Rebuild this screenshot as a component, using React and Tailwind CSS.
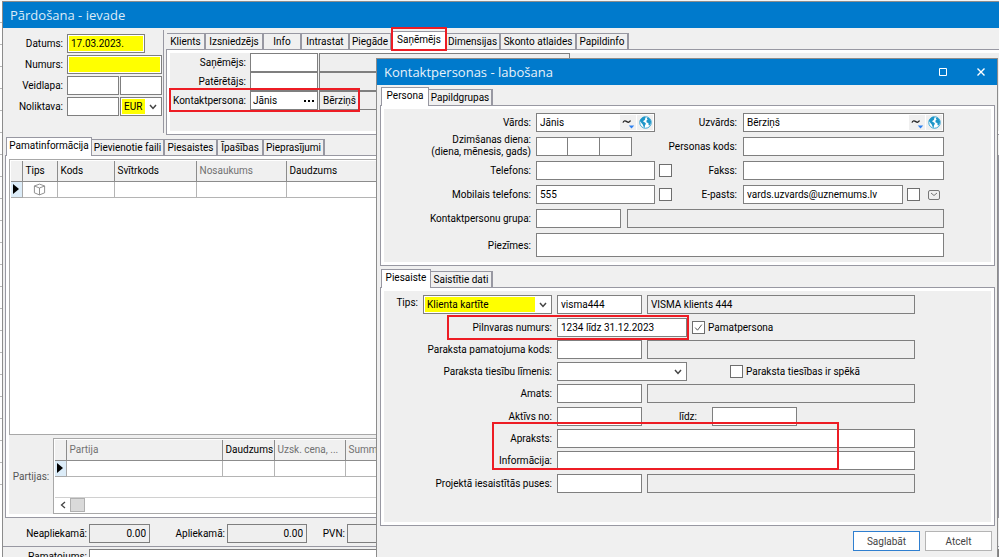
import clsx from "clsx";

/* =========================
   FORM PARTS
========================= */
const box =
  "h-[19px] min-w-0 rounded-none border border-[#7f7f7f] px-[3px] leading-[15px] outline-none";

function Field({ id, label, value = "", className, tone = "bg-white" }) {
  return (
    <input
      id={id}
      aria-label={label}
      defaultValue={value}
      readOnly={tone === "bg-[#efefef]"}
      className={clsx(box, tone, className)}
    />
  );
}

function ReadOnly(props) {
  return <Field {...props} tone="bg-[#efefef]" />;
}

function Label({ htmlFor, className, children }) {
  return (
    <label
      htmlFor={htmlFor}
      className={clsx("shrink-0 whitespace-nowrap text-right", className)}
    >
      {children}
    </label>
  );
}

function Select({ id, label, options, className, yellow }) {
  return (
    <div
      className={clsx(
        "relative h-[19px] shrink-0 border border-[#7f7f7f] bg-white p-px",
        className
      )}
    >
      <select
        id={id}
        aria-label={label}
        className={clsx(
          "block h-full w-full appearance-none pl-[2px] leading-[15px] outline-none",
          yellow ? "bg-[#ffff00]" : "bg-white"
        )}
      >
        {options.map((o) => (
          <option key={o}>{o}</option>
        ))}
      </select>
      <span className="pointer-events-none absolute inset-y-0 right-0 flex w-4 items-center justify-center bg-white">
        <svg viewBox="0 0 8 6" className="h-[6px] w-2">
          <path d="M1 1l3 3.4L7 1" fill="none" stroke="#444" strokeWidth="1.5" />
        </svg>
      </span>
    </div>
  );
}

function Check({ id, label, checked, className }) {
  return (
    <span className={clsx("relative block h-[13px] w-[13px] shrink-0", className)}>
      <input
        id={id}
        type="checkbox"
        aria-label={label}
        defaultChecked={checked}
        className="peer block h-full w-full appearance-none border border-[#6e6e6e] bg-white"
      />
      <svg
        viewBox="0 0 13 13"
        className="pointer-events-none invisible absolute inset-0 peer-checked:visible"
      >
        <path d="M3.2 6.6l2.3 2.6 4.3-5.6" fill="none" stroke="#555" />
      </svg>
    </span>
  );
}

/* =========================
   TABS
========================= */
function Tabs({ tabs, active, marked }) {
  return (
    <div role="tablist" className="flex h-[17px] items-end pl-px">
      {tabs.map(([name, width]) => (
        <button
          key={name}
          role="tab"
          aria-selected={name === active}
          className={clsx(
            "relative flex shrink-0 items-center justify-center whitespace-nowrap border-[#9898a2]",
            width,
            name === active
              ? "z-10 -mb-px h-[19px] border-l border-r border-t bg-white pb-[3px]"
              : "h-4 border-r-2 border-t bg-[#f0f0f0]"
          )}
        >
          {name}
          {name === marked && (
            <span className="absolute -inset-x-[2px] -bottom-px -top-[5px] border-2 border-[#ed1c24]" />
          )}
        </button>
      ))}
    </div>
  );
}

function Panel({ className, children }) {
  return (
    <div className="border border-[#9898a2] bg-white p-[3px]">
      <div className={clsx("bg-[#efefef]", className)}>{children}</div>
    </div>
  );
}

function RedFrame({ className }) {
  return (
    <span
      className={clsx(
        "pointer-events-none absolute z-10 border-2 border-[#ed1c24]",
        className
      )}
    />
  );
}

/* =========================
   ICONS
========================= */
function Globe() {
  return (
    <svg viewBox="0 0 14 14" className="h-[13px] w-[13px]">
      <circle cx="7" cy="7" r="6.2" fill="#fff" stroke="#2a9fd0" strokeWidth="1" />
      <path
        d="M1 5.2C1.8 2.8 4 1 6.4.9l1 1.1-1.2 1.2.5.9-1.8 1-.3 1.2 1.9.6 1 1.5-1 1.6-.5 2.8C4.8 12.4 4.6 10 3.6 8.6 2.6 7.6 1.8 7 1 5.2z"
        fill="#1e96c8"
      />
      <path
        d="M9 1.6c2 .6 3.6 2.2 4 4.4l-.5 2.6-1.3 1.6-.9-.6-.2-2-1.8-.7-.4-1.7 1.4-1.3-.9-1z"
        fill="#1e96c8"
      />
    </svg>
  );
}

function NameField({ id, value, className }) {
  return (
    <div
      className={clsx(
        "flex h-[19px] items-center border border-[#7f7f7f] bg-white",
        className
      )}
    >
      <input
        id={id}
        defaultValue={value}
        className="h-full min-w-0 flex-1 px-[3px] outline-none"
      />
      <button
        aria-label="Locījumi"
        className="mr-px flex h-[15px] w-4 items-center justify-center bg-[#f0f0f0]"
      >
        <svg viewBox="0 0 14 14" className="h-[14px] w-[14px]">
          <path
            d="M2 6.6c.8-2.2 2.4-2 3.800-1s2.800 1 3.700-1"
            fill="none"
            stroke="#222"
            strokeWidth="1.3"
          />
          <path d="M7.800 9.500h5.400l-2.700 3z" fill="#2d7ff0" />
        </svg>
      </button>
      <button
        aria-label="Valoda"
        className="mr-px flex h-[15px] w-4 items-center justify-center bg-[#f0f0f0]"
      >
        <Globe />
      </button>
    </div>
  );
}

function RowMarker() {
  return (
    <svg viewBox="0 0 6 10" className="mx-auto h-[10px] w-[6px]">
      <path d="M0 0v10l6-5z" fill="#000" />
    </svg>
  );
}

/* =========================
   GRIDS
========================= */
function Grid({ columns, firstCell }) {
  return (
    <table className="w-full table-fixed border-collapse bg-white">
      <thead>
        <tr className="h-5 bg-[#f0f0f0]">
          <th className="w-[11px] border-b border-r border-[#8c8c8c]" />
          {columns.map(([name, width, muted]) => (
            <th
              key={name}
              className={clsx(
                "overflow-hidden whitespace-nowrap border-b border-r border-[#8c8c8c] p-0 pl-[3px] text-left font-normal",
                width,
                muted && "text-[#707070]"
              )}
            >
              {name}
            </th>
          ))}
        </tr>
      </thead>
      <tbody>
        <tr className="h-4">
          <td className="border-b border-r border-[#a8a8a8] bg-[#dcecf8] p-0">
            <RowMarker />
          </td>
          {columns.map(([name], i) => (
            <td key={name} className="border-b border-r border-[#b4b4b4] p-0">
              {i === 0 && firstCell}
            </td>
          ))}
        </tr>
      </tbody>
    </table>
  );
}

const saleTabs = [
  ["Klients", "w-[39px]"],
  ["Izsniedzējs", "w-[58px]"],
  ["Info", "w-[38px]"],
  ["Intrastat", "w-[48px]"],
  ["Piegāde", "w-[42px]"],
  ["Saņēmējs", "w-[54px]"],
  ["Dimensijas", "w-[55px]"],
  ["Skonto atlaides", "w-[76px]"],
  ["Papildinfo", "w-[52px]"],
];

const infoTabs = [
  ["Pamatinformācija", "w-[86px]"],
  ["Pievienotie faili", "w-[73px]"],
  ["Piesaistes", "w-[53px]"],
  ["Īpašības", "w-[46px]"],
  ["Pieprasījumi", "w-[61px]"],
];

const goodsColumns = [
  ["Tips", "w-[35px]"],
  ["Kods", "w-[57px]"],
  ["Svītrkods", "w-[82px]"],
  ["Nosaukums", "w-[90px]", true],
  ["Daudzums", ""],
];

const batchColumns = [
  ["Partija", "w-[156px]", true],
  ["Daudzums", "w-[52px]"],
  ["Uzsk. cena, ...", "w-[71px]", true],
  ["Summa", "", true],
];

/* =========================
   SALE WINDOW
========================= */
function SaleWindow() {
  return (
    <div className="flex h-full min-w-0 flex-1 flex-col border-l border-t border-[#8c8c8c] bg-[#f0f0f0]">
      <h1 className="flex h-[26px] shrink-0 items-center bg-[#007acc] pl-[7px] font-['Open_Sans',sans-serif] text-[13px] text-[#dcebf7]">
        Pārdošana - ievade
      </h1>

      <div className="flex h-[110px] shrink-0">
        <div className="mb-[5px] mt-[2px] flex w-[161px] shrink-0 flex-col gap-0.5 border-r border-[#9898a2] pt-1">
          <div className="flex items-center gap-1">
            <Label htmlFor="date" className="w-[60px]">Datums:</Label>
            <Field
              id="date"
              value="17.03.2023."
              tone="bg-[#ffff00]"
              className="w-[78px] shadow-[inset_0_0_0_1px_#fff]"
            />
          </div>
          <div className="flex items-center gap-1">
            <Label htmlFor="number" className="w-[60px]">Numurs:</Label>
            <Field
              id="number"
              tone="bg-[#ffff00]"
              className="w-[95px] shadow-[inset_0_0_0_1px_#fff]"
            />
          </div>
          <div className="flex items-center gap-1">
            <Label htmlFor="form" className="w-[60px]">Veidlapa:</Label>
            <div className="flex gap-px">
              <Field id="form" className="w-[52px]" />
              <Field label="Veidlapas numurs" className="w-[42px]" />
            </div>
          </div>
          <div className="flex items-center gap-1">
            <Label htmlFor="stock" className="w-[60px]">Noliktava:</Label>
            <div className="flex gap-px">
              <Field id="stock" className="w-[52px]" />
              <Select label="Valūta" options={["EUR"]} className="w-[42px]" yellow />
            </div>
          </div>
        </div>

        {/* the panel runs on past the window's right edge */}
        <div className="-mr-1 ml-[2px] min-w-0 flex-1 pt-1">
          <Tabs tabs={saleTabs} active="Saņēmējs" marked="Saņēmējs" />
          <Panel className="flex h-[78px] flex-col">
            <div className="flex items-center gap-1">
              <Label htmlFor="receiver" className="w-[76px]">Saņēmējs:</Label>
              <div className="flex gap-px">
                <Field id="receiver" className="w-[68px]" />
                <ReadOnly label="Saņēmēja nosaukums" className="w-[251px]" />
              </div>
            </div>
            <div className="flex items-center gap-1">
              <Label htmlFor="consumer" className="w-[76px]">Patērētājs:</Label>
              <div className="flex gap-px">
                <Field id="consumer" className="w-[68px]" />
                <ReadOnly label="Patērētāja nosaukums" className="w-[251px]" />
              </div>
            </div>
            <div className="relative flex items-center gap-1">
              <Label htmlFor="contact" className="w-[76px]">Kontaktpersona:</Label>
              <div className="flex gap-px">
                <div className="flex h-[19px] w-[68px] border border-[#7f7f7f] bg-white">
                  <input
                    id="contact"
                    defaultValue="Jānis"
                    className="min-w-0 flex-1 pl-[2px] outline-none"
                  />
                  <button aria-label="Izvēlēties" className="w-4">
                    <svg viewBox="0 0 10 2" className="mx-auto h-[2px] w-[10px]">
                      <path d="M0 0h2v2H0zM4 0h2v2H4zM8 0h2v2H8z" />
                    </svg>
                  </button>
                </div>
                <ReadOnly label="Uzvārds" value="Bērziņš" className="w-[251px]" />
              </div>
              <RedFrame className="-bottom-[2px] -left-px -top-[3px] w-[191px]" />
            </div>
          </Panel>
        </div>
      </div>

      <div className="flex min-h-0 flex-1 flex-col pl-[2px]">
        <Tabs tabs={infoTabs} active="Pamatinformācija" />
        <div className="flex min-h-0 flex-1 flex-col border border-[#9898a2] bg-white p-[3px]">
          <div className="flex min-h-0 flex-1 flex-col bg-[#efefef]">
            <div className="min-h-0 flex-1 border border-[#a8a8a8] bg-white p-px">
              <Grid
                columns={goodsColumns}
                firstCell={
                  <svg
                    viewBox="0 0 14 14"
                    className="mx-auto h-[13px] w-[13px]"
                    fill="none"
                    stroke="#888"
                  >
                    <path d="M7 1.200l5.500 2v7.400L7 12.800l-5.500-2.200V3.200zM1.500 3.200L7 5.400l5.500-2.200M7 5.400v7.400" />
                  </svg>
                }
              />
            </div>
            <div className="mt-[3px] flex h-[76px] shrink-0 items-center">
              <span className="w-[44px] shrink-0 text-center text-[#555]">Partijas:</span>
              <div className="flex h-full min-w-0 flex-1 flex-col border border-[#a8a8a8] bg-white p-px">
                <Grid columns={batchColumns} />
                <div className="mt-auto flex h-[15px] border-t border-[#d0d0d0]">
                  <button
                    aria-label="Ritināt pa kreisi"
                    className="flex w-[15px] items-center justify-center"
                  >
                    <svg viewBox="0 0 6 8" className="h-2 w-[6px]">
                      <path d="M5 1L1.500 4 5 7" fill="none" stroke="#444" strokeWidth="1.300" />
                    </svg>
                  </button>
                  <span className="w-[15px] border border-[#b0b0b0] bg-[#dadada]" />
                </div>
              </div>
            </div>
          </div>
        </div>
      </div>

      <div className="mt-[2px] flex h-[27px] shrink-0 items-center border-b border-[#9898a2]">
        <Label htmlFor="untaxed" className="w-[84px]">Neapliekamā:</Label>
        <ReadOnly id="untaxed" value="0.00" className="ml-[2px] w-[61px] text-right" />
        <Label htmlFor="taxed" className="w-[75px]">Apliekamā:</Label>
        <ReadOnly id="taxed" value="0.00" className="ml-[2px] w-[80px] text-right" />
        <Label htmlFor="vat" className="w-[38px]">PVN:</Label>
        <ReadOnly id="vat" className="ml-[2px] w-[80px] text-right" />
      </div>
      <div className="flex h-[10px] shrink-0 pt-[2px]">
        <Label htmlFor="reason" className="w-[84px]">Pamatojums:</Label>
        <Field id="reason" className="ml-[2px] flex-1" />
      </div>
    </div>
  );
}

/* =========================
   CONTACT DIALOG
========================= */
const rowA = "flex items-center gap-1";
const labelA = "w-[148px] pr-px";
const labelB = "w-[78px]";
const rowB = "relative flex items-center gap-[5px]";
const labelC = "w-[168px]";

function ContactDialog() {
  return (
    <div
      role="dialog"
      aria-label="Kontaktpersonas - labošana"
      className="absolute bottom-0 left-[376px] right-px top-[58px] flex flex-col border-l border-r border-t border-[#8c8c8c] bg-[#f0f0f0]"
    >
      <div className="flex h-[26px] shrink-0 items-center bg-[#007acc] pl-[7px] pr-[11px] text-white">
        <h2 className="flex-1 font-['Open_Sans',sans-serif] text-[13px] text-[#e8f2fa]">
          Kontaktpersonas - labošana
        </h2>
        <button aria-label="Palielināt" className="mr-[28px]">
          <svg viewBox="0 0 10 10" className="h-[10px] w-[10px]">
            <path d="M1.500 1.500h7v7h-7z" fill="none" stroke="#fff" />
          </svg>
        </button>
        <button aria-label="Aizvērt">
          <svg viewBox="0 0 10 10" className="h-[10px] w-[10px]">
            <path d="M1.500 1.500l7 7M8.500 1.500l-7 7" stroke="#fff" strokeWidth="1.400" />
          </svg>
        </button>
      </div>

      {/* ================= PERSON ================= */}
      <div className="pl-[3px] pr-[2px] pt-[3px]">
        <Tabs
          tabs={[
            ["Persona", "w-[48px]"],
            ["Papildgrupas", "w-[64px]"],
          ]}
          active="Persona"
        />
        <Panel className="flex flex-col gap-[5px] pb-[5px] pr-[47px] pt-[4px]">
          <div className={rowA}>
            <Label htmlFor="name" className={labelA}>Vārds:</Label>
            <NameField id="name" value="Jānis" className="w-[119px]" />
            <Label htmlFor="surname" className={labelB}>Uzvārds:</Label>
            <NameField id="surname" value="Bērziņš" className="ml-[2px] flex-1" />
          </div>
          <div className={rowA}>
            <Label htmlFor="day" className="h-[19px] w-[148px] pr-px">
              <span className="-mt-[3px] block leading-3">
                Dzimšanas diena:
                <br />
                (diena, mēnesis, gads)
              </span>
            </Label>
            <div className="flex w-[119px]">
              <Field id="day" className="w-8" />
              <Field label="Mēnesis" className="w-8 border-l-0" />
              <Field label="Gads" className="w-8 border-l-0" />
            </div>
            <Label htmlFor="code" className={labelB}>Personas kods:</Label>
            <Field id="code" className="ml-[2px] flex-1" />
          </div>
          <div className={rowA}>
            <Label htmlFor="phone" className={labelA}>Telefons:</Label>
            <Field id="phone" className="w-[119px]" />
            <Check label="Telefons atzīmēts" />
            <Label htmlFor="fax" className="w-[61px]">Fakss:</Label>
            <Field id="fax" className="ml-[2px] flex-1" />
          </div>
          <div className={rowA}>
            <Label htmlFor="mobile" className={labelA}>Mobilais telefons:</Label>
            <Field id="mobile" value="555" className="w-[119px]" />
            <Check label="Mobilais atzīmēts" />
            <Label htmlFor="mail" className="w-[61px]">E-pasts:</Label>
            <Field id="mail" value="vards.uzvards@uznemums.lv" className="ml-[2px] flex-1" />
            <Check label="E-pasts atzīmēts" />
            <button aria-label="Sūtīt e-pastu" className="flex w-5 justify-center">
              <svg viewBox="0 0 12 10" className="h-[10px] w-3" fill="none" stroke="#777">
                <rect x=".5" y=".5" width="11" height="9" rx="1.500" />
                <path d="M3 3l3 2.500L9 3" />
              </svg>
            </button>
          </div>
          <div className={rowA}>
            <Label htmlFor="group" className={labelA}>Kontaktpersonu grupa:</Label>
            <Field id="group" className="w-[85px]" />
            <ReadOnly label="Grupas nosaukums" className="ml-[2px] flex-1" />
          </div>
          <div className={rowA}>
            <Label htmlFor="notes" className={labelA}>Piezīmes:</Label>
            <textarea
              id="notes"
              className="block h-6 flex-1 resize-none border border-[#7f7f7f] bg-white px-[3px] outline-none"
            />
          </div>
        </Panel>
      </div>

      {/* ================= LINK ================= */}
      <div className="pl-[3px] pr-[2px] pt-1">
        <Tabs
          tabs={[
            ["Piesaiste", "w-[50px]"],
            ["Saistītie dati", "w-[62px]"],
          ]}
          active="Piesaiste"
        />
        <Panel className="flex flex-col gap-1 pb-[29px] pr-[76px] pt-[4px]">
          <div className={rowB}>
            <Label htmlFor="type" className="w-[34px] self-start">Tips:</Label>
            <Select id="type" options={["Klienta kartīte"]} className="w-[129px]" yellow />
            <Field label="Klienta kods" value="visma444" className="w-[85px]" />
            <ReadOnly label="Klienta nosaukums" value="VISMA klients 444" className="flex-1" />
          </div>

          <div className="flex flex-col gap-[3px]">
            <div className={rowB}>
              <Label htmlFor="proxy" className={labelC}>Pilnvaras numurs:</Label>
              <Field id="proxy" value="1234 līdz 31.12.2023" className="w-[130px]" />
              <div className="flex items-center gap-[3px]">
                <Check id="main" checked />
                <Label htmlFor="main">Pamatpersona</Label>
              </div>
              <RedFrame className="-bottom-[3px] -top-[3px] left-[63px] w-[242px]" />
            </div>
            <div className={rowB}>
              <Label htmlFor="basis" className={labelC}>Paraksta pamatojuma kods:</Label>
              <Field id="basis" className="w-[85px]" />
              <ReadOnly label="Pamatojuma nosaukums" className="flex-1" />
            </div>
            <div className={rowB}>
              <Label htmlFor="level" className={labelC}>Paraksta tiesību līmenis:</Label>
              <Select id="level" options={[""]} className="w-[130px]" />
              <div className="ml-[38px] flex items-center gap-[3px]">
                <Check id="valid" />
                <Label htmlFor="valid">Paraksta tiesības ir spēkā</Label>
              </div>
            </div>
            <div className={rowB}>
              <Label htmlFor="post" className={labelC}>Amats:</Label>
              <Field id="post" className="w-[85px]" />
              <ReadOnly label="Amata nosaukums" className="flex-1" />
            </div>
          </div>

          <div className="relative flex flex-col gap-[3px]">
            <div className={rowB}>
              <Label htmlFor="from" className={labelC}>Aktīvs no:</Label>
              <Field id="from" className="w-[85px]" />
              <Label htmlFor="to" className="w-[50px]">līdz:</Label>
              <Field id="to" className="ml-[10px] w-[85px]" />
            </div>
            <div className={rowB}>
              <Label htmlFor="description" className={labelC}>Apraksts:</Label>
              <Field id="description" className="flex-1" />
            </div>
            <div className={rowB}>
              <Label htmlFor="info" className={labelC}>Informācija:</Label>
              <Field id="info" className="flex-1" />
            </div>
            <RedFrame className="bottom-0 left-[108px] top-[15px] w-[347px]" />
          </div>

          <div className={rowB}>
            <Label htmlFor="sides" className={labelC}>Projektā iesaistītās puses:</Label>
            <Field id="sides" className="w-[85px]" />
            <ReadOnly label="Puses nosaukums" className="flex-1" />
          </div>
        </Panel>
      </div>

      <div className="flex justify-end gap-[5px] pr-[5px] pt-[5px] text-[#444]">
        <button className="h-5 w-[67px] border border-[#2f7fd0] bg-white">Saglabāt</button>
        <button className="h-5 w-[67px] border border-[#b4b4b4] bg-white">Atcelt</button>
      </div>
    </div>
  );
}

export default function App() {
  return (
    <div className="relative flex h-screen overflow-hidden bg-[#f4f4f4] pt-px font-['Roboto','DejaVu_Sans_Condensed',sans-serif] text-[10px] leading-[15px] text-black">
      {/* sliver of the list behind the window */}
      <div className="w-[2px] shrink-0 bg-white">
        {Array.from({ length: 22 }, (_, i) => (
          <div key={i} className="h-[22px] border-b border-[#b8b8b8]" />
        ))}
      </div>
      <SaleWindow />
      <ContactDialog />
    </div>
  );
}
